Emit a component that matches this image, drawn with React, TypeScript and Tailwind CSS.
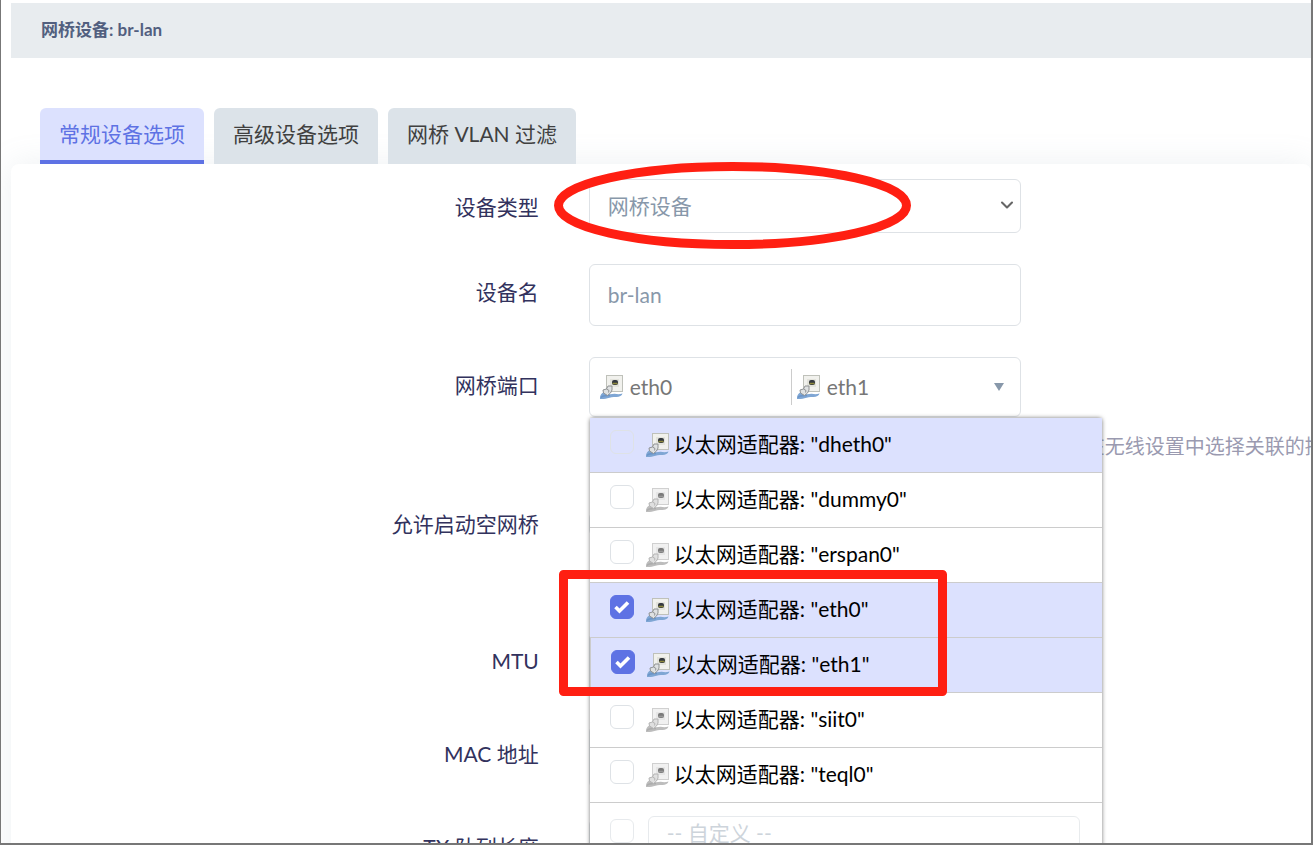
import React from 'react';
import { ChevronDown } from 'lucide-react';

interface Port {
  name: string;
  up?: boolean;
  selected?: boolean;
}

const tabs = [
  { id: 'general', label: '常规设备选项', active: true },
  { id: 'advanced', label: '高级设备选项', active: false },
  { id: 'vlan', label: '网桥 VLAN 过滤', active: false },
];

const ports: Port[] = [
  { name: 'dheth0', up: true },
  { name: 'dummy0' },
  { name: 'erspan0' },
  { name: 'eth0', up: true, selected: true },
  { name: 'eth1', up: true, selected: true },
  { name: 'siit0' },
  { name: 'teql0' },
];

const inputClass =
  'block h-[62px] w-[432px] rounded-md border border-[#dee2e6] bg-white px-[18px] pb-0.5 text-[#8898aa]';

function PortIcon({ up }: { up?: boolean }) {
  const edge = up ? '#8f9294' : '#b4b4b4';

  return (
    <svg width="24" height="24" viewBox="0 0 24 24" fill="none" className="shrink-0" aria-hidden="true">
      <rect x="6" y="0" width="17" height="17" fill={up ? '#bfc1ba' : '#d0d0d0'} />
      <rect x="7" y="1" width="15" height="15" fill={up ? '#f1f1ed' : '#f1f1f1'} />
      <rect x="10" y="4" width="9" height="8" fill={up ? '#e3e3dc' : '#e6e6e6'} />
      <rect x="12" y="5" width="6" height="5" rx="2" fill={up ? '#34383f' : '#7a7a7a'} />
      <path d="M12.500 8.500h5" stroke={up ? '#8f8a3c' : '#999'} strokeWidth="1.500" />
      <path
        d="M0 24c-.3-3 1-6 4-6.500l4 1.500c3 .7 5-.5 8 0 2.500.4 4.500 0 6.500-.5-.5 2-3 3.500-6 3.500-4 0-6 .5-9 1.200-2.500.8-5 .8-7.500.8z"
        fill={up ? '#7fa6d4' : '#bdbdbd'}
      />
      <path d="M1 22.500c2-2.500 5-2 9-2" stroke={up ? '#6a94c8' : '#acacac'} strokeWidth="1.500" />
      <path d="M3 15l3.500-1 1.500-3h4v4l-1.500 3-3 2.500L3.500 18z" fill={up ? '#dfe1e2' : '#e0e0e0'} stroke={edge} />
      <path d="m6.500 14 2.500 1.500-.5 2" stroke={edge} />
    </svg>
  );
}

function PortCheckbox({ id, checked, label }: { id: string; checked?: boolean; label?: string }) {
  return (
    <span className="relative mb-1.5 block size-6 shrink-0">
      <input
        id={id}
        type="checkbox"
        defaultChecked={checked}
        aria-label={label}
        className="peer block size-6 appearance-none rounded-md border border-[#dee2e6] checked:border-[#5e72e4] checked:bg-[#5e72e4]"
      />
      <svg
        className="pointer-events-none absolute inset-0 hidden size-6 peer-checked:block"
        viewBox="0 0 24 24"
        fill="none"
        aria-hidden="true"
      >
        <path d="m5.500 12 4 4 8.500-8.500" stroke="white" strokeWidth="3.600" />
      </svg>
    </span>
  );
}

function Row({ id, label, children }: { id: string; label: string; children: React.ReactNode }) {
  return (
    <div className="flex items-start">
      <label htmlFor={id} className="w-4/9 shrink-0 pt-3 pr-[50px] text-right leading-8 text-[#32325d]">
        {label}
      </label>
      <div className="relative">{children}</div>
    </div>
  );
}

function PortMenu() {
  return (
    <div className="absolute top-[61px] left-px z-10 w-[512px] rounded-[3px] bg-white text-black shadow-[0_0_4px_#777]">
      <ul>
        {ports.map(port => (
          <li
            key={port.name}
            className={`border-b border-[#ccc] ${port.up ? 'bg-[#dce1fe]' : 'bg-white'} ${
              port.name === 'eth1' ? 'border-l' : ''
            }`}
          >
            <label htmlFor={`port-${port.name}`} className="flex h-[54px] items-center pl-5">
              <PortCheckbox id={`port-${port.name}`} checked={port.selected} />
              <span className="ml-3 flex items-center gap-1">
                <PortIcon up={port.up} />
                <span className="pb-0.5">以太网适配器: "{port.name}"</span>
              </span>
            </label>
          </li>
        ))}
        <li className="flex h-[62px] items-center pl-5 opacity-70">
          <PortCheckbox id="port-custom" label="自定义" />
          <input
            type="text"
            aria-label="自定义端口"
            placeholder="-- 自定义 --"
            className="ml-3.5 h-9 w-[432px] rounded-md border border-[#dee2e6] px-[18px] pb-1 placeholder:text-[#b9c3cd]"
          />
        </li>
      </ul>
      <svg
        className="pointer-events-none absolute top-[152px] -left-[31px]"
        width="388"
        height="126"
        fill="none"
        aria-hidden="true"
      >
        <rect x="4.500" y="4.500" width="379" height="117" stroke="#ff1f12" strokeWidth="9" strokeLinejoin="round" />
      </svg>
    </div>
  );
}

export default function App() {
  return (
    <div className="h-screen overflow-hidden border-r-2 border-b-2 border-l border-[#777] bg-white pt-[3px] pl-2.5 font-['Lato','Noto_Sans_CJK_SC',sans-serif] text-[21px]">
      <header className="bg-[#e8ecef] px-[30px] pt-3.5 pb-4">
        <h1 className="text-[17px] leading-[25px] font-bold text-[#525f7f]">网桥设备: br-lan</h1>
      </header>

      <nav className="relative z-10 mt-[50px] flex gap-2.5 pl-[29px]">
        {tabs.map(tab => (
          <button
            key={tab.id}
            type="button"
            className={`h-14 rounded-t-md border-b-4 px-[18px] ${
              tab.active
                ? 'border-[#5e72e4] bg-[#dce1fe] px-[19px] text-[#5e72e4]'
                : 'border-[#dce3e9] bg-[#dce3e9] px-[19px] text-[#404040]'
            }`}
          >
            {tab.label}
          </button>
        ))}
      </nav>

      <form className="flex h-full flex-col gap-[31px] rounded-lg bg-white pt-[15px] shadow-[0_0_32px_rgba(136,152,170,0.15)]">
        <Row id="type" label="设备类型">
          <select
            id="type"
            className="block h-[54px] w-[432px] appearance-none rounded-md border border-[#dee2e6] bg-white px-[18px] text-[#8898aa]"
          >
            <option>网桥设备</option>
          </select>
          <ChevronDown className="pointer-events-none absolute top-4 right-1 size-5 text-[#666]" strokeWidth={2.5} />
          <svg
            className="pointer-events-none absolute -top-[17px] -left-[35px]"
            width="357"
            height="87"
            fill="none"
            aria-hidden="true"
          >
            <ellipse cx="178.500" cy="43.500" rx="174" ry="39" stroke="#ff1f12" strokeWidth="9" />
          </svg>
        </Row>

        <Row id="name" label="设备名">
          <input id="name" type="text" defaultValue="br-lan" className={inputClass} />
        </Row>

        <Row id="ports" label="网桥端口">
          <button
            id="ports"
            type="button"
            className="flex h-[60px] w-[432px] items-center rounded-md border border-[#dee2e6] bg-white pl-2.5 text-left text-[#777]"
          >
            <span className="flex h-9 w-[192px] items-center gap-1.5 border-r border-[#ccc]">
              <PortIcon up />
              eth0
            </span>
            <span className="flex h-9 flex-1 items-center gap-1.5 pl-[5px]">
              <PortIcon up />
              eth1
            </span>
            <svg width="10" height="8" className="mr-4" aria-hidden="true">
              <path d="M0 0h10L5 8z" fill="#8898aa" />
            </svg>
          </button>
          <PortMenu />
          <p className="mt-[11px] h-[37px] w-0 pl-4 text-[20px] leading-9 whitespace-nowrap text-[#9a9ab0]">
            指定要附加到此网桥的有线端口。要附加无线网络，请在无线设置中选择关联的接口作为网络。
          </p>
        </Row>

        <Row id="empty" label="允许启动空网桥">
          <div className="h-[106px] pt-4">
            <input id="empty" type="checkbox" className="size-6 appearance-none rounded-md border border-[#dee2e6]" />
          </div>
        </Row>

        <Row id="mtu" label="MTU">
          <input id="mtu" type="text" className={inputClass} />
        </Row>

        <Row id="mac" label="MAC 地址">
          <input id="mac" type="text" className={inputClass} />
        </Row>

        <Row id="txqueue" label="TX 队列长度">
          <input id="txqueue" type="text" className={inputClass} />
        </Row>
      </form>
    </div>
  );
}
